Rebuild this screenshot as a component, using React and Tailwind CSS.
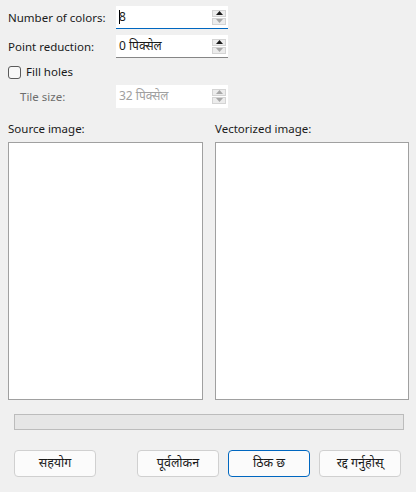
import React from "react";

const font = "font-['Segoe_UI','Noto_Sans','Liberation_Sans',sans-serif]";

// маленькая кнопка спина (вверх/вниз)
const SpinArrow = ({ up, active }) => (
  <span className="flex h-[7px] w-[14px] items-center justify-center border border-[#d4d4d4] bg-[#ececec]">
    <svg width="7" height="4" viewBox="0 0 7 4">
      {up ? (
        <polygon points="0,4 7,4 3.5,0" fill={active ? "#1a1a1a" : "#a8a8a8"} />
      ) : (
        <polygon points="0,0 7,0 3.5,4" fill={active ? "#1a1a1a" : "#a8a8a8"} />
      )}
    </svg>
  </span>
);

const SpinField = ({ value, focused, disabled, caret }) => (
  <div
    className={
      "flex h-[23px] w-[112px] items-center justify-between bg-white pl-[3px] pr-[2px] " +
      (focused
        ? "border-b border-[#0067c0]"
        : disabled
        ? "border-b border-transparent"
        : "border-b border-[#868686]")
    }
  >
    <span
      className={
        "flex items-center text-[12px] leading-none " +
        (disabled ? "text-[#a0a0a0]" : "text-[#1a1a1a]")
      }
    >
      {caret && <span className="mr-[-1px] h-[14px] w-px bg-black" />}
      {value}
    </span>
    <div className="flex flex-col gap-[1px]">
      <SpinArrow up active={!disabled} />
      <SpinArrow />
    </div>
  </div>
);

const Btn = ({ children, primary }) => (
  <button
    type="button"
    className={
      "flex h-[27px] w-[82px] items-center justify-center rounded-[4px] bg-[#fbfbfb] text-[12.5px] text-[#1a1a1a] " +
      (primary ? "border border-[#0067c0]" : "border border-[#d0d0d0]")
    }
  >
    {children}
  </button>
);

export default function App() {
  return (
    <div className={"flex h-[492px] w-[416px] flex-col bg-[#f0f0f0] text-[11.5px] text-[#1a1a1a] " + font}>
      {/* настройки */}
      <div className="flex flex-col px-[8px] pt-[6px]">
        <div className="flex h-[23px] items-center">
          <span className="w-[108px]">Number of colors:</span>
          <SpinField value="8" focused caret />
        </div>
        <div className="mt-[6px] flex h-[23px] items-center">
          <span className="w-[108px]">Point reduction:</span>
          <SpinField value="0 पिक्सेल" />
        </div>
        <label className="mt-[6px] flex h-[16px] items-center gap-[5px]">
          <span className="h-[13px] w-[13px] rounded-[3px] border border-[#5a5a5a] bg-[#f7f7f7]" />
          <span>Fill holes</span>
        </label>
        <div className="mt-[6px] flex h-[21px] items-center">
          <span className="w-[108px] pl-[12px] text-[#6d6d6d]">Tile size:</span>
          <SpinField value="32 पिक्सेल" disabled />
        </div>
      </div>

      {/* картинки */}
      <div className="mt-[13px] flex gap-[12px] px-[8px]">
        <div className="flex flex-col">
          <span className="h-[22px]">Source image:</span>
          <div className="h-[258px] w-[195px] border border-[#a0a0a0] bg-white" />
        </div>
        <div className="flex flex-col">
          <span className="h-[22px]">Vectorized image:</span>
          <div className="h-[258px] w-[194px] border border-[#a0a0a0] bg-white" />
        </div>
      </div>

      {/* прогресс */}
      <div className="mx-[14px] mt-[14px] h-[16px] w-[390px] border border-[#bcbcbc] bg-[#e6e6e6]" />

      {/* кнопки */}
      <div className="mt-[20px] flex px-[14px]">
        <Btn>सहयोग</Btn>
        <div className="ml-[41px] flex gap-[9px]">
          <Btn>पूर्वलोकन</Btn>
          <Btn primary>ठिक छ</Btn>
          <Btn>रद्द गर्नुहोस्</Btn>
        </div>
      </div>
    </div>
  );
}
